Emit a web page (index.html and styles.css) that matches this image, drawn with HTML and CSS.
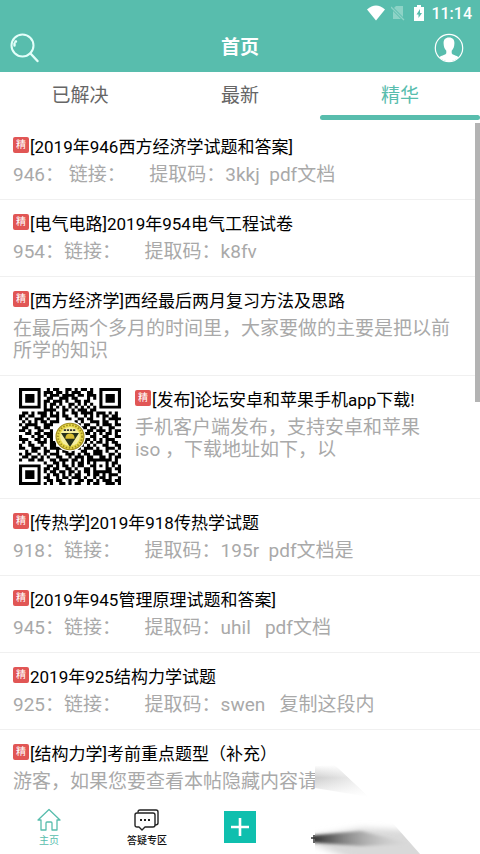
FILE: index.html
```
<!DOCTYPE html>
<html lang="zh-CN">
<head>
  <meta charset="UTF-8">
  <meta name="viewport" content="width=device-width, initial-scale=1">

  <title>首页</title>

  <link rel="stylesheet" href="styles.css">
</head>
<body>

  <header>
    <div class="status">
      <svg width="18" height="16" viewBox="0 0 18 16" fill="#fff"><path d="M0 4.500Q9-3.500 18 4.500L9 15.500Z"/></svg>
      <svg class="no-sim" width="14" height="16" viewBox="0 0 14 16"><path d="M5 1h7v13H2V4Z" fill="#8dd3c6"/><path d="M0 2l13 13" stroke="#58bdad" stroke-width="3"/><path d="M0 2l13 13" stroke="#8dd3c6" stroke-width="1.300"/></svg>
      <svg class="battery" width="10" height="16" viewBox="0 0 10 16"><path d="M3 0h4v2h3v14H0V2h3Z" fill="#fff"/><path d="M6 4L2.500 9.500h2V13L8 8H6Z" fill="#58bdad"/></svg>
      <span>11:14</span>
    </div>
    <div class="topbar">
      <button class="icon-btn" aria-label="搜索">
        <svg width="30" height="30" viewBox="0 0 30 30" fill="none" stroke="#e4fffa" stroke-linecap="round"><circle cx="12.500" cy="12.500" r="11" stroke-width="2"/><path d="M20.500 20.500l7 7.500" stroke-width="2.400"/><path d="M4.500 12.500v-2M5.500 8.500h.5" stroke-width="2.400"/></svg>
      </button>
      <h1>首页</h1>
      <button class="icon-btn" aria-label="我的">
        <svg width="30" height="30" viewBox="0 0 30 30"><circle cx="15" cy="15" r="13.700" fill="none" stroke="#fff" stroke-width="1.200"/><path d="M15 4.500c-4 0-5.600 2.600-5.400 6 .1 3.500 1 5.500 2.700 7.200v2.500c-.6 1.800-5.300 2.200-7 4a13.500 13.500 0 0 0 19.400 0c-1.700-1.800-6.400-2.200-7-4v-2.500c1.700-1.700 2.600-3.700 2.700-7.200.2-3.400-1.400-6-5.400-6Z" fill="#fff"/></svg>
      </button>
    </div>
  </header>

  <nav class="tabs">
    <a href="#solved">已解决</a>
    <a href="#latest">最新</a>
    <a href="#best" class="active">精华</a>
  </nav>

  <main>
    <ul class="posts">
      <li>
        <h2><span class="tag">精</span>[2019年946西方经济学试题和答案]</h2>
        <p>946： 链接：     提取码：3kkj  pdf文档</p>
      </li>
      <li>
        <h2><span class="tag">精</span>[电气电路]2019年954电气工程试卷</h2>
        <p>954：链接：     提取码：k8fv</p>
      </li>
      <li>
        <h2><span class="tag">精</span>[西方经济学]西经最后两月复习方法及思路</h2>
        <p>在最后两个多月的时间里，大家要做的主要是把以前所学的知识</p>
      </li>
      <li class="with-pic">
        <svg class="qr" viewBox="0 0 33 33" preserveAspectRatio="none" role="img" aria-label="二维码">
          <path id="modules"/>
          <circle cx="16.500" cy="16.500" r="5.100" fill="#fff"/>
          <circle cx="16.500" cy="16.500" r="4.500" fill="#e8d94a" stroke="#a38f1c" stroke-width=".4"/>
          <circle cx="16.500" cy="16.500" r="3.900" fill="none" stroke="#a08c20" stroke-width=".6" stroke-dasharray=".5 .5"/>
          <circle cx="16.500" cy="16.500" r="3.200" fill="#f6eea0"/>
          <path d="M13.600 15.300h5.800l-2.900 4.800Z" fill="#26301c"/>
          <path d="M15 17.300q0-1.800 1.500-1.800t1.500 1.800Z" fill="#d9bd32"/>
          <path d="M14.500 14.300h4" stroke="#333" stroke-width=".6" stroke-dasharray=".7 .3"/>
        </svg>
        <div>
          <h2><span class="tag">精</span>[发布]论坛安卓和苹果手机app下载!</h2>
          <p>手机客户端发布，支持安卓和苹果<br>iso ，下载地址如下，以</p>
        </div>
      </li>
      <li>
        <h2><span class="tag">精</span>[传热学]2019年918传热学试题</h2>
        <p>918：链接：     提取码：195r  pdf文档是</p>
      </li>
      <li>
        <h2><span class="tag">精</span>[2019年945管理原理试题和答案]</h2>
        <p>945：链接：     提取码：uhil   pdf文档</p>
      </li>
      <li>
        <h2><span class="tag">精</span>2019年925结构力学试题</h2>
        <p>925：链接：     提取码：swen   复制这段内</p>
      </li>
      <li>
        <h2><span class="tag">精</span>[结构力学]考前重点题型（补充）</h2>
        <p>游客，如果您要查看本帖隐藏内容请</p>
      </li>
    </ul>
    <div class="scrollbar"></div>
  </main>

  <nav class="bottom">
    <a href="#home" class="active">
      <svg width="26" height="24" viewBox="0 0 26 24" fill="none" stroke="#58bdad" stroke-width="1.300" stroke-linejoin="round" stroke-linecap="round"><path d="M2 12L13 1.500 24 12h-3v10h-5v-7q0-1-1-1h-4q-1 0-1 1v7H5V12Z"/></svg>
      <span>主页</span>
    </a>
    <a href="#qa">
      <svg width="26" height="24" viewBox="0 0 26 24" fill="none" stroke="#222" stroke-width="1.400" stroke-linejoin="round"><path d="M3 5h16q2 0 2 2v10q0 2-2 2h-8l-3 3-3-3H3q-2 0-2-2V7q0-2 2-2Z"/><path d="M4 4.500q0-2.500 2-2.500h16q2 0 2 2v11q0 2-3 2"/><path d="M6 12h2M10 12h2M14 12h2" stroke-width="2"/></svg>
      <span>答疑专区</span>
    </a>
    <button class="add" aria-label="发帖">
      <svg width="32" height="32" viewBox="0 0 32 32"><path d="M16 7v18M7 16h18" stroke="#fff" stroke-width="2.600"/></svg>
    </button>
  </nav>

  <svg class="smear" viewBox="0 0 120 90" aria-hidden="true">
    <defs>
      <linearGradient id="upper" x2="0" y2="1">
        <stop offset="0" stop-color="#fff"/>
        <stop offset=".4" stop-color="#cfcfcf"/>
        <stop offset="1" stop-color="#fff"/>
      </linearGradient>
      <linearGradient id="fade">
        <stop offset="0" stop-color="#fff" stop-opacity="0"/>
        <stop offset="1" stop-color="#fff" stop-opacity=".85"/>
      </linearGradient>
      <linearGradient id="dark">
        <stop offset="0" stop-color="#222"/>
        <stop offset=".3" stop-color="#777"/>
        <stop offset="1" stop-color="#ccc" stop-opacity="0"/>
      </linearGradient>
      <filter id="soft" x="-20%" y="-60%" width="140%" height="220%"><feGaussianBlur stdDeviation="4 3"/></filter>
      <filter id="thin" x="-20%" y="-60%" width="140%" height="220%"><feGaussianBlur stdDeviation="2 1.500"/></filter>
      <clipPath id="edge"><path d="M4 0h18l4 3 38 36 45 51H4Z"/></clipPath>
    </defs>
    <path d="M4 0h116v90H4Z" fill="#fff"/>
    <g clip-path="url(#edge)">
      <path d="M4 2L24 1l34 32L4 24Z" fill="url(#upper)"/>
      <path d="M4 0h56v35H4Z" fill="url(#fade)"/>
      <path d="M-4 73L50 64l50 2 30 34H50L-4 77Z" fill="#d9d9d9" filter="url(#soft)"/>
      <path d="M-4 72L50 67l50 13-50 2L-4 78Z" fill="url(#dark)" filter="url(#thin)"/>
    </g>
    <path d="M0 74h4M3 71v8" stroke="#333" stroke-width="1.500"/>
  </svg>

  <script>
    // QR modules, one string per row
    const rows = [
      '#######..#.##..##.#.##.#..#######',
      '#.....#.###.##.#.###..##..#.....#',
      '#.###.#.#.###.####.##.###.#.###.#',
      '#.###.#..##..###.##...#.#.#.###.#',
      '#.###.#.##.###.#..##.##...#.###.#',
      '#.....#.#.##.#..##.#.#.#..#.....#',
      '#######.#.#.#.#.#.#.#.#.#.#######',
      '........####..##.#.###.##........',
      '.##.#.###.#.#.#..##.####.###.#.#.',
      '##.##..##.###.##..#..#.#.#.##.##.',
      '#.#..###.#..#..##..##.##...#.####',
      '.#.#.#.##.###.....#.#..###.##..#.',
      '#.####..###........#.##..#.###.##',
      '.##..##.##..........##.##.#..##..',
      '##.#..##..#.........#.##.###.#.##',
      '..##.##.###..........##.#.#.##.#.',
      '#...#.##.##.........#..##..##..##',
      '###..##.#.#..........##.#.#.###..',
      '.#.#..###.##........##.#.##.#.##.',
      '#..##..#..##.......##.#.#..##..##',
      '##..###.#.####...#.#.###.#..###.#',
      '..#.##..##..#.##.#..##..###.#..#.',
      '#.##..#.#.###..###.#.##.###..##.#',
      '.##.##.#.#..##..#.###.##..##.#.##',
      '#..##.##..##.###.##.#.########.#.',
      '........#..##.#..#.##.#.#...#.##.',
      '#######..##.#.##.#.##..##.#.#.#.#',
      '#.....#.##.##..##.#..##.#...##.##',
      '#.###.#.#.##.##.##.#.##.######..#',
      '#.###.#..#.##.#.#.##..#.##.#.###.',
      '#.###.#.##..#.##.###.#..#.##.#..#',
      '#.....#..##.##..#..##.##.#.###.##',
      '#######.#.#..##.#.##..#.##..###.#'
    ];
    let d = '';
    rows.forEach((row, y) => {
      [...row].forEach((cell, x) => {
        if (cell === '#') d += `M${x} ${y}h1v1h-1z`;
      });
    });
    document.getElementById('modules').setAttribute('d', d);
  </script>
</body>
</html>
```
FILE: styles.css
```
:root {
  --accent: #58bdad;
  --add: #0fbfae;
  --tag: #e15655;
  --muted: #a9a9a9;
  --line: #f0f0f0;
}
* { margin: 0; padding: 0; box-sizing: border-box; }
body {
  height: 100vh; display: flex; flex-direction: column; position: relative;
  overflow: hidden; background: #fff; color: #111;
  font-family: Roboto, "Noto Sans CJK SC", sans-serif;
}
a { color: inherit; text-decoration: none; }
button { border: none; background: none; cursor: pointer; }
svg { display: block; }

header { background: var(--accent); color: #fff; }
.status {
  height: 24px; padding: 2px 8px 0 0;
  display: flex; justify-content: flex-end; align-items: center;
  font-size: 16px; font-weight: 500;
}
.status .no-sim { margin-left: 6px; }
.status .battery { margin: 0 7px 0 9px; }
.topbar {
  height: 48px; padding: 0 16px 0 10px;
  display: grid; grid-template-columns: 1fr auto 1fr; align-items: center;
}
.topbar h1 { font-size: 19px; line-height: 22px; font-weight: 700; padding-left: 6px; }
.topbar .icon-btn:last-child { justify-self: end; }

.tabs { display: flex; height: 48px; flex-shrink: 0; }
.tabs a {
  flex: 1; text-align: center; font-size: 19px; line-height: 48px; color: #666;
  position: relative;
}
.tabs .active { color: var(--accent); }
.tabs .active::after {
  content: ""; position: absolute; left: 0; right: 0; bottom: 0;
  height: 5px; border-radius: 3px; background: var(--accent);
}

main { flex: 1; min-height: 0; overflow: hidden; position: relative; }
.posts { list-style: none; padding-top: 3px; }
.posts li { padding: 12px 13px 13px; border-bottom: 1px solid var(--line); }
.posts h2 {
  display: flex; align-items: center; margin-bottom: 5px;
  font-size: 17px; font-weight: 400; line-height: 24px; color: #000;
}
.posts p { font-size: 19px; line-height: 22px; color: var(--muted); white-space: pre-wrap; }
.tag {
  width: 16px; height: 16px; margin: 0 1px 4px 0; border-radius: 2px;
  background: var(--tag); color: #fff;
  font-size: 10px; line-height: 16px; text-align: center;
}
.posts .with-pic { display: flex; gap: 14px; padding-left: 19px; }
.qr { width: 102px; height: 97px; flex-shrink: 0; }
.scrollbar {
  position: absolute; right: 0; top: 3px; width: 5px; height: 279px;
  background: #b3b3b3;
}

.bottom {
  display: grid; grid-template-columns: 1fr 1fr 88px 1fr 1fr;
  height: 54px; flex-shrink: 0; background: #fff; color: #111;
}
.bottom a {
  display: flex; flex-direction: column; align-items: center; padding-top: 8px;
  font-size: 10px; line-height: 16px; font-weight: 500;
}
.bottom a span { margin-top: 1px; }
.bottom .active { color: var(--accent); font-weight: 400; }
.add { justify-self: center; align-self: center; background: var(--add); }
.smear { position: absolute; right: 49px; bottom: 0; width: 120px; height: 90px; }
```
